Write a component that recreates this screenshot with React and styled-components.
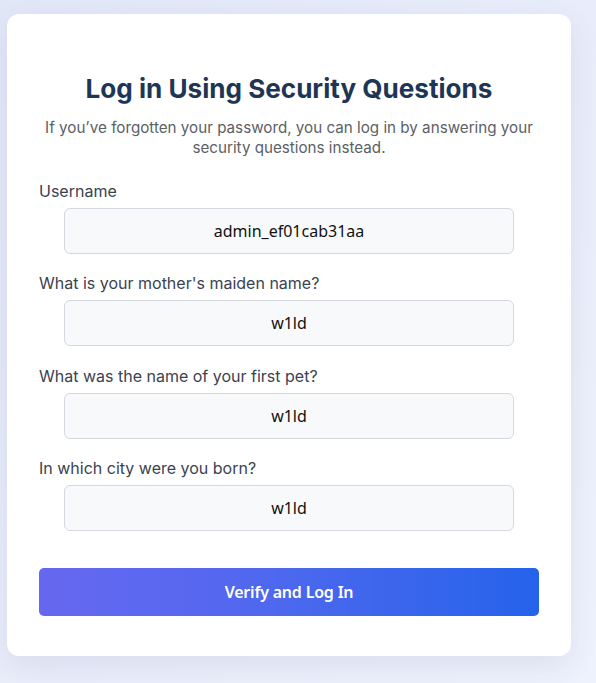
import React from "react";
import styled, { createGlobalStyle } from "styled-components";

const Global = createGlobalStyle`
  html, body { margin: 0; padding: 0; }
  body {
    min-height: 683px;
    background: linear-gradient(135deg, #e2e7f8 0%, #eaeefb 60%, #eef2fd 100%);
    font-family: Inter, "Noto Sans", sans-serif;
  }
`;

const Page = styled.div`
  padding: 14px 0 27px 7px;
`;

const Card = styled.form`
  width: 564px;
  box-sizing: border-box;
  background: #ffffff;
  border-radius: 12px;
  padding: 58px 32px 40px;
  box-shadow: 0 10px 30px rgba(40, 50, 100, 0.09);
`;

const Title = styled.h2`
  margin: 0;
  font-family: Inter, sans-serif;
  font-size: 26.1px;
  line-height: 34px;
  font-weight: 700;
  color: #1e3656;
  text-align: center;
`;

const Subtitle = styled.p`
  margin: 12px 0 21px;
  font-size: 15.2px;
  line-height: 20px;
  color: #5b5f66;
  text-align: center;
  padding: 0 2px;
`;

const Field = styled.div`
  display: flex;
  flex-direction: column;
  margin-bottom: 17.3px;
`;

const Label = styled.label`
  font-size: 16px;
  line-height: 24px;
  color: #3b4250;
  margin-bottom: 5px;
`;

const Input = styled.input`
  width: 90%;
  align-self: center;
  box-sizing: border-box;
  height: 46px;
  border: 1px solid #d4d7de;
  border-radius: 6px;
  background: #f8f9fb;
  font-family: "Noto Sans", sans-serif;
  font-size: 16px;
  color: #111;
  text-align: center;
  outline: none;
`;

const Button = styled.button`
  width: 100%;
  height: 48px;
  margin-top: 19.7px;
  border: none;
  border-radius: 5px;
  background: linear-gradient(90deg, #6767f0 0%, #4f68ee 45%, #2563eb 100%);
  color: #ffffff;
  font-family: "Noto Sans", sans-serif;
  font-weight: 600;
  font-size: 16px;
  cursor: pointer;
  letter-spacing: -0.2px;
`;

const fields = [
  { label: "Username", value: "admin_ef01cab31aa" },
  { label: "What is your mother's maiden name?", value: "w1ld" },
  { label: "What was the name of your first pet?", value: "w1ld" },
  { label: "In which city were you born?", value: "w1ld" },
];

export default function App() {
  return (
    <Page>
      <Global />
      <Card onSubmit={(e) => e.preventDefault()}>
        <Title>Log in Using Security Questions</Title>
        <Subtitle>
          If you’ve forgotten your password, you can log in by answering your
          security questions instead.
        </Subtitle>
        {fields.map((f) => (
          <Field key={f.label}>
            <Label>{f.label}</Label>
            <Input defaultValue={f.value} />
          </Field>
        ))}
        <Button type="submit">Verify and Log In</Button>
      </Card>
    </Page>
  );
}
